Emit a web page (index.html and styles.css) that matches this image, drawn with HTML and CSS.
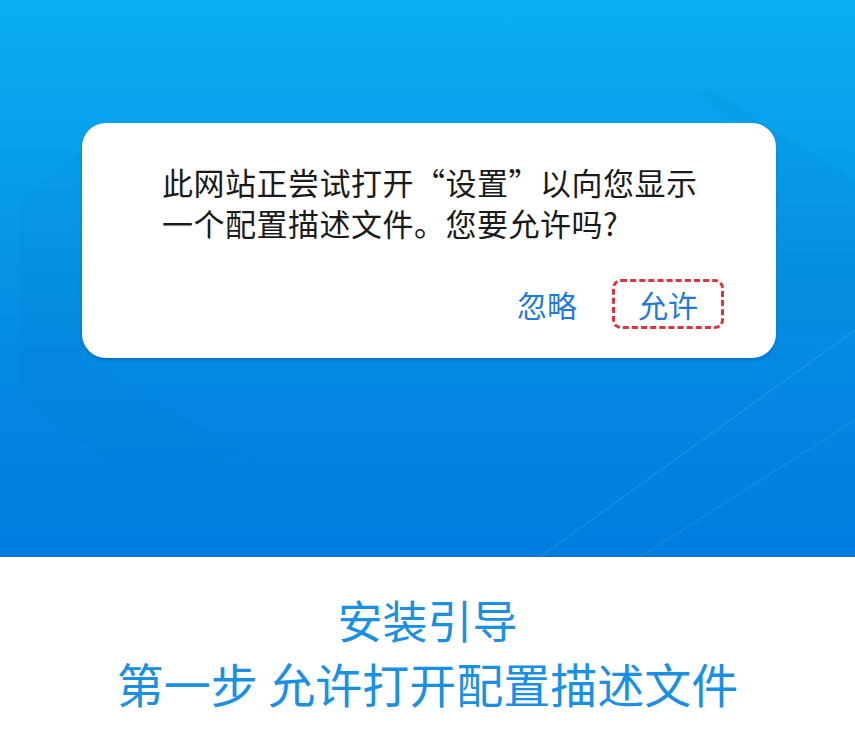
FILE: index.html
```html
<!DOCTYPE html>
<html lang="zh-CN">
<head>
<meta charset="utf-8">
<title>安装引导</title>
<link rel="stylesheet" href="styles.css">
</head>
<body>
<section class="hero">
  <svg class="deco" width="855" height="557" viewBox="0 0 855 557" aria-hidden="true">
    <polygon points="20,200 82,150 82,360 260,460 120,470 20,400" fill="#0a5fb8" opacity="0.05"/>
    <polygon points="690,90 720,95 855,180 855,330 776,330 776,150" fill="#0a5fb8" opacity="0.07"/>
    <line x1="540" y1="557" x2="855" y2="330" stroke="#ffffff" stroke-opacity="0.07" stroke-width="2"/>
    <line x1="640" y1="557" x2="855" y2="420" stroke="#ffffff" stroke-opacity="0.05" stroke-width="2"/>
  </svg>
  <div class="dialog">
    <p class="message">此网站正尝试打开“设置”以向您显示<br>一个配置描述文件。您要允许吗?</p>
    <div class="actions">
      <span class="btn">忽略</span>
      <span class="btn btn-highlight">允许</span>
    </div>
  </div>
</section>
<section class="caption">
  <h1 class="title">安装引导</h1>
  <p class="step">第一步 允许打开配置描述文件</p>
</section>
</body>
</html>
```

FILE: styles.css
```css
* { box-sizing: border-box; }
html, body { margin: 0; padding: 0; background: #ffffff; }
body {
  width: 855px;
  height: 730px;
  overflow: hidden;
  font-family: "Noto Sans CJK SC", "Noto Sans", sans-serif;
}
.hero {
  position: relative;
  height: 557px;
  padding: 123px 0 0 82px;
  background: linear-gradient(180deg, #0aaef2 0%, #079ee9 30%, #0589e2 65%, #007ddf 100%);
  border-bottom: 1px solid #1a6fc0;
}
.deco {
  position: absolute;
  left: 0;
  top: 0;
}
.dialog {
  position: relative;
  width: 694px;
  height: 235px;
  background: #ffffff;
  border-radius: 24px;
  box-shadow: 0 2px 3px rgba(0, 40, 100, 0.25);
  padding: 38px 52px 0 80px;
  display: flex;
  flex-direction: column;
}
.message {
  margin: 0;
  font-size: 31px;
  line-height: 41px;
  font-weight: 400;
  color: #1a1a1a;
  letter-spacing: 0.5px;
}
.actions {
  margin-top: 36px;
  display: flex;
  justify-content: flex-end;
  align-items: center;
  gap: 35px;
}
.btn {
  font-size: 30px;
  line-height: 36px;
  font-weight: 400;
  color: #1f7ad6;
}
.btn-highlight {
  width: 112px;
  height: 50px;
  display: flex;
  align-items: center;
  justify-content: center;
  border: 3px dashed #e0313f;
  border-radius: 9px;
}
.caption {
  text-align: center;
  color: #1b8fe2;
  padding-top: 35px;
}
.title {
  margin: 0;
  font-size: 45px;
  line-height: 56px;
  font-weight: 400;
}
.step {
  margin: 6px 0 0;
  font-size: 47px;
  line-height: 58px;
  font-weight: 400;
}
```
